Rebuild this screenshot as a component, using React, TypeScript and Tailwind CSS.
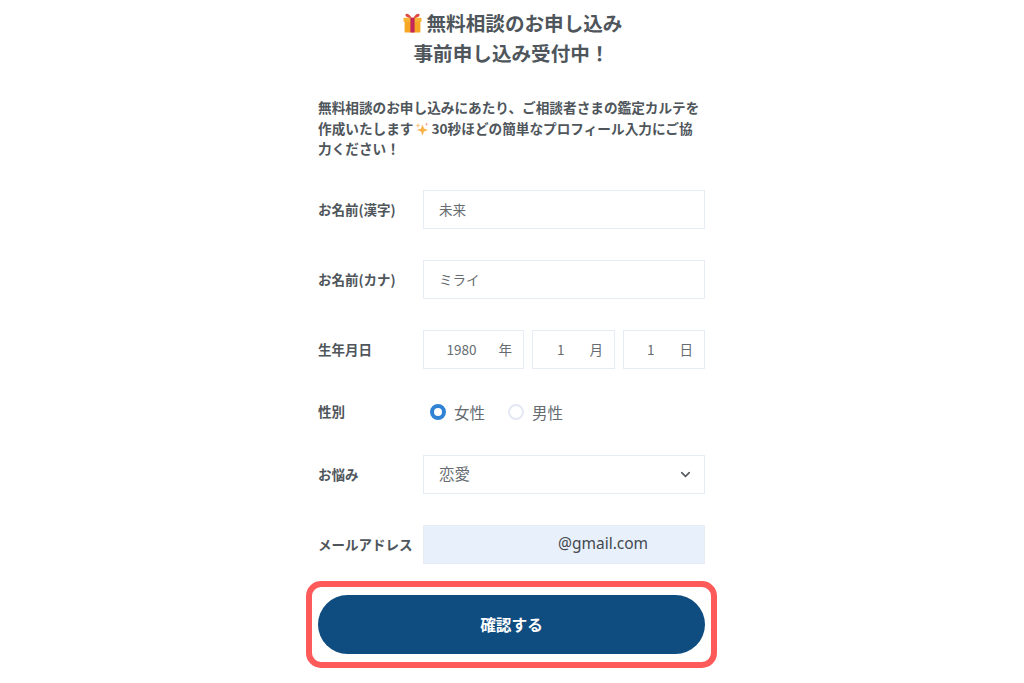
import React from "react";
import { ChevronDown } from "lucide-react";

const FONT = "font-['Noto_Sans_CJK_JP','Noto_Sans',sans-serif]";
const boxClass = "h-[39px] border border-[#e6ecf6] bg-white flex items-center text-[13.5px] text-[#666c70]";

const GiftIcon = () => (
  <svg width="19" height="20" viewBox="0 0 18 19" className="shrink-0">
    <path d="M8.5 5C6 1 3.5 0 2.5 1.2 1.5 2.6 4 5 8.5 5Z" fill="#e0473f" />
    <path d="M9.5 5C12 1 14.5 0 15.5 1.2 16.5 2.6 14 5 9.5 5Z" fill="#e0473f" />
    <rect x="0.5" y="4.5" width="17" height="4" rx="0.5" fill="#f9b233" />
    <rect x="1.5" y="8.5" width="15" height="10" rx="0.5" fill="#f6a623" />
    <rect x="7" y="4.5" width="4" height="14" fill="#c2265a" />
  </svg>
);

const SparkleIcon = () => (
  <svg width="14" height="14" viewBox="0 0 14 14" className="shrink-0">
    <path d="M7.5 2.5 9 6.5 13 8 9 9.5 7.5 13.5 6 9.5 2 8 6 6.5Z" fill="#f8b24a" />
    <path d="M3 1 3.7 2.8 5.5 3.5 3.7 4.2 3 6 2.3 4.2.5 3.5 2.3 2.8Z" fill="#fbc77c" />
    <path d="M11.5 0.5 12 1.8 13.3 2.3 12 2.8 11.5 4 11 2.8 9.7 2.3 11 1.8Z" fill="#f9a58c" />
  </svg>
);

const Row = ({ label, children }: { label: string; children: React.ReactNode }) => (
  <div className="flex items-center">
    <div className="w-[105px] shrink-0 text-[13.5px] font-bold text-[#4f565b] whitespace-nowrap">{label}</div>
    <div className="flex-1 min-w-0">{children}</div>
  </div>
);

const DateBox = ({ value, unit, gap, className }: { value: string; unit: string; gap: string; className: string }) => (
  <div className={`${boxClass} ${className} justify-end pr-[11px]`}>
    <span>{value}</span>
    <span className={gap}>{unit}</span>
  </div>
);

const Radio = ({ label, checked }: { label: string; checked?: boolean }) => (
  <div className="flex items-center gap-[8px]">
    {checked ? (
      <span className="w-[16px] h-[16px] rounded-full border-[4.5px] border-[#2f82d4] bg-white" />
    ) : (
      <span className="w-[16px] h-[16px] rounded-full border-2 border-[#e3e9f2] bg-white" />
    )}
    <span className="text-[15.5px] leading-[24px] text-[#666c70]">{label}</span>
  </div>
);

export default function App() {
  return (
    <div className={`${FONT} w-[1024px] h-[683px] bg-white overflow-hidden flex justify-center pr-[1px]`}>
      <div className="w-[387px]">
        <div className="pt-[8px] text-center text-[19.6px] leading-[30px] font-bold text-[#4f565b]">
          <div className="flex items-center justify-center gap-[5px] pl-[2px]">
            <GiftIcon />
            <span>無料相談のお申し込み</span>
          </div>
          <div>事前申し込み受付中！</div>
        </div>

        <p className="mt-[29px] text-[13.65px] leading-[20.5px] font-bold text-[#4f565b] whitespace-nowrap">
          無料相談のお申し込みにあたり、ご相談者さまの鑑定カルテを
          <br />
          作成いたします
          <span className="inline-block align-[-2px] ml-[1px] mr-[3px]">
            <SparkleIcon />
          </span>
          30秒ほどの簡単なプロフィール入力にご協
          <br />
          力ください！
        </p>

        <div className="mt-[31px] flex flex-col gap-[31px]">
          <Row label="お名前(漢字)">
            <div className={`${boxClass} pl-[15px]`}>未来</div>
          </Row>
          <Row label="お名前(カナ)">
            <div className={`${boxClass} pl-[15px]`}>ミライ</div>
          </Row>
          <Row label="生年月日">
            <div className="flex gap-[8px]">
              <DateBox value="1980" unit="年" gap="ml-[22px]" className="w-[101px]" />
              <DateBox value="1" unit="月" gap="ml-[25px]" className="w-[83px]" />
              <DateBox value="1" unit="日" gap="ml-[25px]" className="w-[82px]" />
            </div>
          </Row>
          <Row label="性別">
            <div className="h-[24px] pl-[7px] flex items-center gap-[23px]">
              <Radio label="女性" checked />
              <Radio label="男性" />
            </div>
          </Row>
          <Row label="お悩み">
            <div className={`${boxClass} pl-[15px] pr-[16px] justify-between !text-[15.5px]`}>
              <span>恋愛</span>
              <ChevronDown size={15} strokeWidth={2.6} className="text-[#555b60] -mr-[5px]" />
            </div>
          </Row>
          <Row label="メールアドレス">
            <div className="h-[39px] border border-[#e6ecf6] bg-[#e8f0fb] flex items-center pl-[134px] text-[15.5px] text-[#43494e] font-['Noto_Sans',sans-serif]">
              @gmail.com
            </div>
          </Row>
        </div>

        <div className="mt-[17px] -mx-[12px] border-[6px] border-[#ff5a5a] rounded-[15px] px-[6px] py-[8px]">
          <button className="w-full h-[59px] rounded-full bg-[#0f4c7f] text-white text-[15.7px] font-bold pt-[1px]">
            確認する
          </button>
        </div>
      </div>
    </div>
  );
}
